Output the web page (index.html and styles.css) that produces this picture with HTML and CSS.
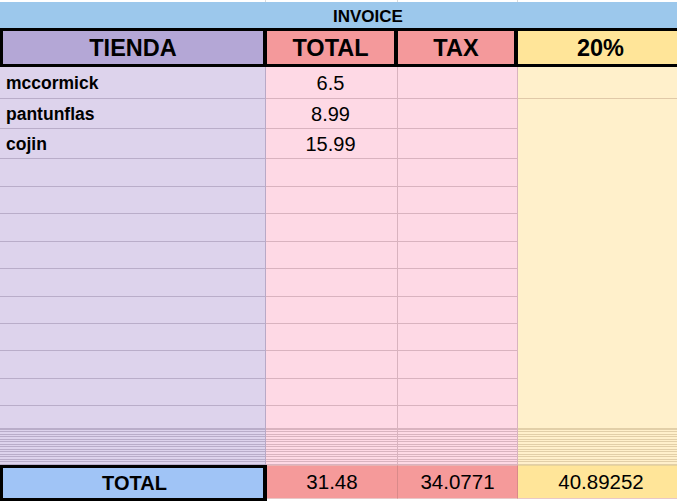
FILE: index.html
```html
<!DOCTYPE html>
<html>
<head>
<meta charset="utf-8">
<link rel="stylesheet" href="styles.css">
</head>
<body>
<div class="sheet">
  <div class="strip">
    <div class="strip-cell c1"></div>
    <div class="strip-cell c2"></div>
    <div class="strip-cell c3"></div>
    <div class="strip-cell c4"></div>
  </div>
  <div class="band">INVOICE</div>
  <div class="head">
    <div class="hcell purple">TIENDA</div>
    <div class="hcell red">TOTAL</div>
    <div class="hcell red">TAX</div>
    <div class="hcell yellow">20%</div>
  </div>
  <div class="body">
    <div class="cell name r1">mccormick</div>
    <div class="cell num r1">6.5</div>
    <div class="cell tax r1"></div>
    <div class="cell pct r1"></div>

    <div class="cell name">pantunflas</div>
    <div class="cell num">8.99</div>
    <div class="cell tax"></div>
    <div class="cell pct merged"></div>

    <div class="cell name">cojin</div>
    <div class="cell num">15.99</div>
    <div class="cell tax"></div>

    <div class="cell name"></div><div class="cell num"></div><div class="cell tax"></div>
    <div class="cell name"></div><div class="cell num"></div><div class="cell tax"></div>
    <div class="cell name"></div><div class="cell num"></div><div class="cell tax"></div>
    <div class="cell name"></div><div class="cell num"></div><div class="cell tax"></div>
    <div class="cell name"></div><div class="cell num"></div><div class="cell tax"></div>
    <div class="cell name"></div><div class="cell num"></div><div class="cell tax"></div>
    <div class="cell name"></div><div class="cell num"></div><div class="cell tax"></div>
    <div class="cell name"></div><div class="cell num"></div><div class="cell tax"></div>
    <div class="cell name"></div><div class="cell num"></div><div class="cell tax"></div>
    <div class="cell name"></div><div class="cell num"></div><div class="cell tax"></div>

    <div class="dense d-purple"></div>
    <div class="dense d-pink"></div>
    <div class="dense d-pink"></div>
    <div class="dense d-yellow"></div>
  </div>
  <div class="totals">
    <div class="tlabel">TOTAL</div>
    <div class="tval tpink">31.48</div>
    <div class="tval tpink">34.0771</div>
    <div class="tval tyellow">40.89252</div>
  </div>
</div>
</body>
</html>
```
FILE: styles.css
```css
html, body {
  margin: 0;
  padding: 0;
  background: #ffffff;
}
body {
  font-family: "Liberation Sans", Arial, sans-serif;
  color: #000;
  overflow: hidden;
}
.sheet {
  width: 684px;
  height: 501px;
  overflow: hidden;
}
.strip {
  display: grid;
  grid-template-columns: 266px 132px 120px 166px;
  height: 2px;
}
.strip-cell {
  border-right: 1px solid #dadada;
}
.band {
  height: 26px;
  background: #9cc8ec;
  box-sizing: border-box;
  padding-left: 333px;
  padding-top: 5px;
  font-weight: bold;
  font-size: 17px;
  line-height: 20px;
}
.head {
  display: grid;
  grid-template-columns: 260px 127px 116px 1fr;
  column-gap: 4px;
  background: #000;
  padding: 3px 0 3px 3px;
  height: 33px;
}
.hcell {
  display: flex;
  align-items: center;
  justify-content: center;
  font-weight: bold;
  font-size: 23.5px;
  padding-top: 1px;
}
.purple { background: #b4a7d6; }
.red { background: #f4999b; }
.yellow { background: #ffe599; padding-right: 1px; }

.body {
  display: grid;
  grid-template-columns: 266px 132px 120px 166px;
  grid-template-rows: 32px 30px 30px 28px 27px 28px 27px 28px 27px 27px 28px 27px 23px 36px;
}
.cell {
  box-sizing: border-box;
  border-bottom: 1px solid #b9adc9;
  display: flex;
  align-items: center;
}
.name {
  background: #ddd3ec;
  border-right: 1px solid #b9a9c6;
  font-weight: bold;
  font-size: 17.5px;
  padding-left: 6px;
  padding-top: 1px;
}
.num {
  background: #fed9e5;
  border-right: 1px solid #d9b3bf;
  border-bottom-color: #d9b3bf;
  justify-content: center;
  font-size: 20px;
  padding-right: 2px;
  padding-top: 1px;
}
.tax {
  background: #fed9e5;
  border-right: 1px solid #d9b3bf;
  border-bottom-color: #d9b3bf;
}
.pct {
  background: #fff0cb;
  border-bottom-color: #e2cfa8;
}
.r1.pct { border-bottom-color: #e0c9a8; }
.merged {
  grid-row: span 12;
  border-bottom-color: #e2cfa8;
}
.dense {
  box-sizing: border-box;
}
.d-purple {
  border-right: 1px solid #b9a9c6;
  background: repeating-linear-gradient(to bottom, #b9adc9 0, #b9adc9 1px, #ddd3ec 1px, #ddd3ec 2.5px);
}
.d-pink {
  border-right: 1px solid #d9b3bf;
  background: repeating-linear-gradient(to bottom, #d9b3bf 0, #d9b3bf 1px, #fed9e5 1px, #fed9e5 2.5px);
}
.d-yellow {
  background: repeating-linear-gradient(to bottom, #e2cfa8 0, #e2cfa8 1px, #fff0cb 1px, #fff0cb 2.5px);
}
.totals {
  display: grid;
  grid-template-columns: 267px 131px 120px 166px;
  height: 36px;
}
.tlabel {
  box-sizing: border-box;
  border: 3px solid #000;
  border-right-width: 4px;
  height: 36px;
  background: #a0c4f6;
  font-weight: bold;
  font-size: 20px;
  display: flex;
  align-items: center;
  justify-content: center;
  padding-left: 3px;
}
.tval {
  box-sizing: border-box;
  height: 34px;
  border-top: 1px solid #e6b3b3;
  border-bottom: 1px solid #e8c8c8;
  font-size: 20.5px;
  display: flex;
  align-items: center;
  justify-content: center;
}
.tpink {
  background: #f59a9a;
  border-right: 1px solid #d98a8a;
}
.tyellow {
  background: #ffe599;
  border-top-color: #e8d49a;
}
```
